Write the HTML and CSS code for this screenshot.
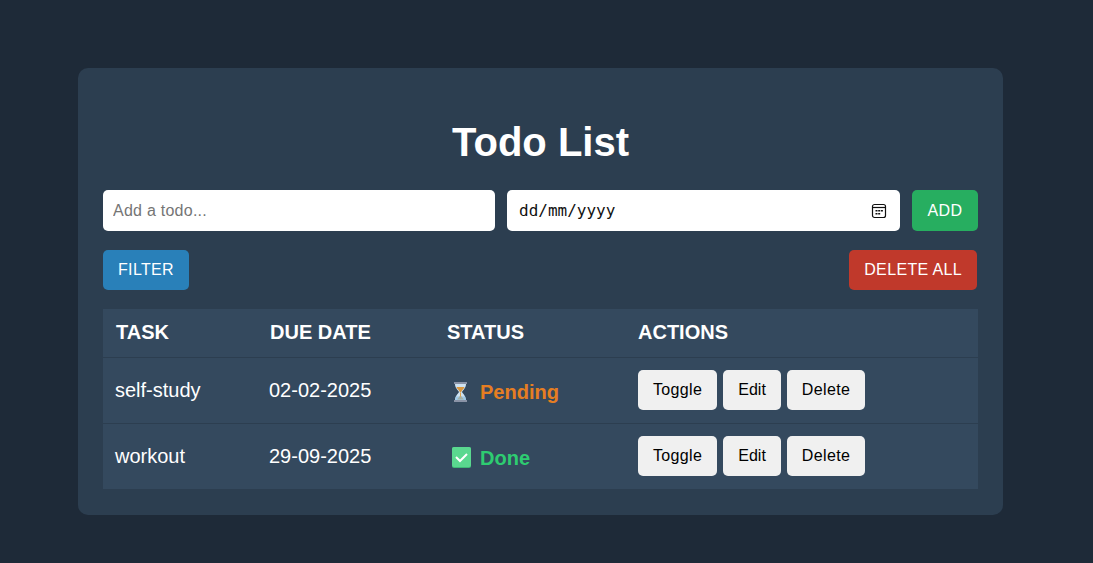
FILE: index.html
```html
<!DOCTYPE html>
<html lang="en">
<head>
    <meta charset="UTF-8">
    <meta name="viewport" content="width=device-width, initial-scale=1.0">
    <title>Todo List</title>
    <link rel="stylesheet" href="styles.css">
</head>
<body>

    <div class="container">
        <h1>Todo List</h1>

        <div class="add-row">
            <input class="field" type="text" placeholder="Add a todo...">
            <div class="field date-field">
                <span>dd/mm/yyyy</span>
                <svg width="16" height="16" viewBox="0 0 16 16" fill="none">
                    <rect x="1.500" y="1.500" width="13" height="13" rx="2" stroke="#111" stroke-width="1.200"/>
                    <path d="M1.500 4.500h13" stroke="#111" stroke-width="1.200"/>
                    <path d="M4.500 7h2v1.500h-2zM7.200 7h2v1.500h-2zM9.900 7h2v1.500h-2zM4.500 10h2v1.500h-2zM7.200 10h2v1.500h-2z" fill="#111"/>
                </svg>
            </div>
            <button class="btn btn-add">ADD</button>
        </div>

        <div class="tools-row">
            <button class="btn btn-filter">FILTER</button>
            <button class="btn btn-delete-all">DELETE ALL</button>
        </div>

        <table>
            <thead>
                <tr>
                    <th class="col-task">Task</th>
                    <th class="col-date">Due Date</th>
                    <th class="col-status">Status</th>
                    <th>Actions</th>
                </tr>
            </thead>
            <tbody>
                <tr>
                    <td>self-study</td>
                    <td>02-02-2025</td>
                    <td>
                        <span class="status pending">
                            <svg width="27" height="22" viewBox="0 0 27 22">
                                <path d="M8 3h11c0 4-3 6-4 8 1 2 4 4 4 8H8c0-4 3-6 4-8-1-2-4-4-4-8z" fill="#cfe3f2"/>
                                <path d="M9.500 6h8c-.6 2-3 3.500-3.500 5.500h-1C12.500 9.500 10.100 8 9.500 6z" fill="#d9973f"/>
                                <path d="M13 12h1v3l3 3.500H10l3-3.500z" fill="#e0a44c"/>
                                <path d="M9 15.500h9l1 3.500H8z" fill="#7db9e3" opacity=".6"/>
                                <rect x="7" y="1" width="13" height="2" fill="#8a93a6"/>
                                <rect x="7" y="19" width="13" height="2" fill="#8a93a6"/>
                            </svg>
                            Pending
                        </span>
                    </td>
                    <td>
                        <div class="actions">
                            <button class="btn btn-row">Toggle</button>
                            <button class="btn btn-row btn-edit">Edit</button>
                            <button class="btn btn-row">Delete</button>
                        </div>
                    </td>
                </tr>
                <tr>
                    <td>workout</td>
                    <td>29-09-2025</td>
                    <td>
                        <span class="status done">
                            <svg width="27" height="22" viewBox="0 0 27 22">
                                <rect x="5" y="0" width="19" height="21" rx="2" fill="#3fb877"/>
                                <rect x="5" y="0" width="19" height="20" rx="2" fill="#5ad88f"/>
                                <path d="M9 10l4 4 7-7" fill="none" stroke="#fff" stroke-width="2"/>
                            </svg>
                            Done
                        </span>
                    </td>
                    <td>
                        <div class="actions">
                            <button class="btn btn-row">Toggle</button>
                            <button class="btn btn-row btn-edit">Edit</button>
                            <button class="btn btn-row">Delete</button>
                        </div>
                    </td>
                </tr>
            </tbody>
        </table>
    </div>

</body>
</html>
```

FILE: styles.css
```css
body {
    font-family: "Liberation Sans", Arial, sans-serif;
    background-color: #1e2a38;
    color: white;
    margin: 0;
    padding: 68px 0 48px 78px;
}

.container {
    width: 925px;
    box-sizing: border-box;
    background-color: #2c3e50;
    border-radius: 10px;
    padding: 51px 25px 26px;
}

h1 {
    font-size: 40px;
    line-height: 46px;
    text-align: center;
    margin: 0 0 25px;
}

.add-row {
    display: grid;
    grid-template-columns: 392px 393px 66px;
    gap: 12px;
    margin-bottom: 19px;
}

.field {
    min-width: 0;
    height: 41px;
    box-sizing: border-box;
    border: none;
    border-radius: 5px;
    background-color: white;
    padding: 0 10px;
    font-family: "Liberation Sans", Arial, sans-serif;
    font-size: 16px;
    letter-spacing: .25px;
    color: #111;
}

.field::placeholder {
    color: #757575;
}

.date-field {
    display: flex;
    align-items: center;
    justify-content: space-between;
    padding: 0 13px 0 12px;
    font-family: "DejaVu Sans Mono", monospace;
    letter-spacing: 0;
}

.btn {
    height: 40px;
    border: none;
    border-radius: 5px;
    padding: 0 15px;
    font-family: "Liberation Sans", Arial, sans-serif;
    font-size: 16px;
    letter-spacing: .35px;
    color: white;
    cursor: pointer;
}

.btn-add {
    height: 41px;
    padding: 0;
    background-color: #27ae60;
}

.tools-row {
    display: flex;
    justify-content: space-between;
    padding-right: 1px;
    margin-bottom: 19px;
}

.btn-filter {
    background-color: #2980b9;
}

.btn-delete-all {
    background-color: #c0392b;
}

table {
    width: 100%;
    border-collapse: separate;
    border-spacing: 0;
    table-layout: fixed;
    background-color: #34495e;
    font-size: 20px;
}

th {
    text-align: left;
    text-transform: uppercase;
    padding: 11px 12px 13px;
    line-height: 24px;
    border-bottom: 1px solid #2c3e50;
}

td {
    padding: 12px 12px 13px;
    line-height: 40px;
    border-bottom: 1px solid #2c3e50;
}

tbody tr:last-child td {
    border-bottom: none;
}

.col-task {
    width: 129px;
    padding-left: 13px;
}

.col-date {
    width: 153px;
    padding-left: 13px;
}

.col-status {
    width: 167px;
}

.status {
    display: flex;
    align-items: center;
    gap: 6px;
    font-weight: bold;
    position: relative;
    top: 2px;
}

.pending {
    color: #e67e22;
}

.done {
    color: #2ecc71;
}

.actions {
    display: flex;
    gap: 6px;
}

.btn-row {
    background-color: #f0f0f0;
    color: #000;
}

.btn-edit {
    letter-spacing: 0;
}
```
